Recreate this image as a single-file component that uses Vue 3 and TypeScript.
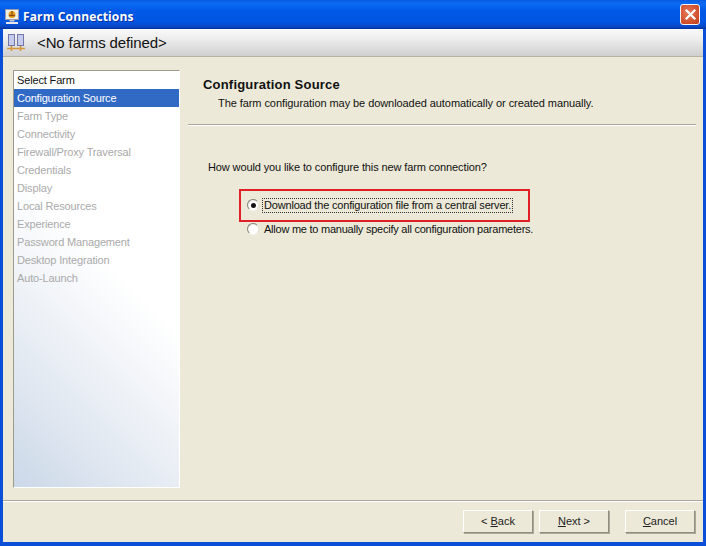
<script setup lang="ts">
const steps: string[] = ['Select Farm', 'Configuration Source', 'Farm Type', 'Connectivity', 'Firewall/Proxy Traversal', 'Credentials', 'Display', 'Local Resources', 'Experience', 'Password Management', 'Desktop Integration', 'Auto-Launch']
</script>

<template>
  <div class="window">
    <div class="titlebar">
      <svg class="appicon" width="14" height="15" viewBox="0 0 14 15">
        <rect x="0.5" y="0.5" width="13" height="10" fill="#f1efe6" stroke="#9a9cab"/>
        <circle cx="7" cy="5.5" r="3.5" fill="#e8a422"/>
        <path d="M7 2v3.5M4 6.5h6" stroke="#8a4a10" stroke-width="1.3"/>
        <rect x="4.5" y="11" width="5" height="1.5" fill="#c9ccd6"/>
        <rect x="1" y="13" width="12" height="2" fill="#e6e6ea"/>
      </svg>
      <span class="title">Farm Connections</span>
      <button class="close" aria-label="Close">
        <svg width="13" height="13" viewBox="0 0 13 13"><path d="M2.5 2.5l8 8M10.5 2.5l-8 8" stroke="#fff" stroke-width="2.2" stroke-linecap="square"/></svg>
      </button>
    </div>
    <div class="body">
      <div class="farmbar">
        <svg class="farmicon" width="18" height="18" viewBox="0 0 18 18">
          <rect x="1.5" y="0.5" width="6" height="11" fill="#c6cdec" stroke="#7478a8"/>
          <rect x="10.5" y="0.5" width="6" height="11" fill="#c6cdec" stroke="#7478a8"/>
          <path d="M0 14.5h18" stroke="#d8963a" stroke-width="1.5"/>
          <path d="M4.5 12v5M13.5 12v5" stroke="#d8963a" stroke-width="1.5"/>
        </svg>
        <span class="farmname">&lt;No farms defined&gt;</span>
      </div>
      <div class="main">
        <ul class="steps">
          <li v-for="(s, i) in steps" :key="s" :class="{ done: i === 0, active: i === 1 }">{{ s }}</li>
        </ul>
        <div class="content">
          <div class="heading">
            <h1>Configuration Source</h1>
            <p>The farm configuration may be downloaded automatically or created manually.</p>
          </div>
          <div class="question">
            <p class="ask">How would you like to configure this new farm connection?</p>
            <label class="radio first">
              <span class="dot on"></span>
              <span class="focus">Download the configuration file from a central server.</span>
              <span class="redbox"></span>
            </label>
            <label class="radio">
              <span class="dot"></span>
              <span class="plain">Allow me to manually specify all configuration parameters.</span>
            </label>
          </div>
        </div>
      </div>
      <div class="footer">
        <button class="btn"><span>&lt; <u>B</u>ack</span></button>
        <button class="btn"><span><u>N</u>ext &gt;</span></button>
        <button class="btn cancel"><span><u>C</u>ancel</span></button>
      </div>
    </div>
  </div>
</template>

<style>
html, body { margin: 0; background: #ece9d8; }
</style>

<style scoped>
.window {
  width: 706px;
  height: 546px;
  box-sizing: border-box;
  display: flex;
  flex-direction: column;
  overflow: hidden;
  background: #0a4fd8;
  font-family: "Liberation Sans", sans-serif;
  font-size: 11px;
  color: #111;
}
.titlebar {
  height: 29px;
  flex: none;
  box-sizing: border-box;
  display: flex;
  align-items: center;
  padding: 3px 5px 0 5px;
  background: linear-gradient(#0a5ae0 0%, #0a6af2 12%, #0058e6 40%, #0056e2 75%, #0a46c4 92%, #02349c 100%);
}
.appicon { flex: none; margin-right: 4px; }
.title {
  font-family: "Open Sans", "Liberation Sans", sans-serif;
  font-weight: 700;
  font-size: 12px;
  letter-spacing: 0.13px;
  color: #fff;
  text-shadow: 1px 1px 0 #0a2f9a;
}
.close {
  margin: -3px 1px 0 auto;
  width: 20px;
  height: 21px;
  padding: 0;
  display: flex;
  align-items: center;
  justify-content: center;
  border: 1px solid #f4f4f4;
  border-radius: 3px;
  background: radial-gradient(circle at 40% 40%, #e8775a, #cc4a26 75%, #b83a1c);
}
.body {
  flex: 1;
  margin: 0 3px 4px 3px;
  display: flex;
  flex-direction: column;
  background: #ece9d8;
  min-height: 0;
}
.farmbar {
  height: 28px;
  flex: none;
  display: flex;
  align-items: center;
  box-sizing: border-box;
  padding-left: 4px;
  border-bottom: 1px solid #b5b2a6;
  background: linear-gradient(#fafafa, #f0f0f0 30%, #cfcfcf);
}
.farmicon { flex: none; }
.farmname {
  margin-left: 12px;
  font-size: 15px;
  letter-spacing: -0.12px;
  color: #111;
}
.main {
  flex: 1;
  display: flex;
  min-height: 0;
  padding: 13px 0 12px 10px;
}
.steps {
  width: 167px;
  height: 418px;
  flex: none;
  box-sizing: border-box;
  margin: 0;
  padding: 0;
  list-style: none;
  border: 1px solid;
  border-color: #9d9a8e #fff #fff #9d9a8e;
  background: linear-gradient(225deg, #fff 45%, #e8edf4 72%, #cbd8e8 100%);
}
.steps li {
  height: 18px;
  line-height: 18px;
  padding-left: 3px;
  color: #aaa;
  letter-spacing: -0.15px;
  white-space: nowrap;
}
.steps li.done { color: #111; }
.steps li.active { background: #316ac5; color: #fff; letter-spacing: -0.2px; }
.content { flex: 1; min-width: 0; padding: 0 7px 0 8px; }
.heading {
  height: 55px;
  box-sizing: border-box;
  padding: 8px 0 0 15px;
  border-bottom: 1px solid #aca899;
  box-shadow: 0 1px 0 #fff;
}
.heading h1 {
  margin: 0;
  font-size: 13px;
  letter-spacing: 0.2px;
  font-weight: 700;
  line-height: 14px;
}
.heading p {
  margin: 4px 0 0 15px;
  line-height: 14px;
  letter-spacing: -0.07px;
}
.question { padding: 35px 0 0 20px; }
.ask { margin: 0 0 19px; line-height: 14px; letter-spacing: -0.12px; }
.radio {
  position: relative;
  display: flex;
  align-items: center;
  height: 24px;
  padding-left: 39px;
}
.dot {
  width: 12px;
  height: 12px;
  flex: none;
  box-sizing: border-box;
  border-radius: 50%;
  border: 1px solid;
  border-color: #85837a #e6e4da #f7f7f2 #85837a;
  background: radial-gradient(circle at 60% 60%, #fff 45%, #e2e0d6);
  display: flex;
  align-items: center;
  justify-content: center;
}
.dot.on::after {
  content: "";
  width: 5px;
  height: 5px;
  border-radius: 50%;
  background: #111;
}
.focus { margin-left: 3px; padding: 0 1px; border: 1px dotted #333; line-height: 13px; white-space: nowrap; letter-spacing: -0.18px; }
.plain { margin-left: 5px; white-space: nowrap; letter-spacing: -0.24px; }
.redbox {
  position: absolute;
  left: 31px;
  top: -4px;
  width: 291px;
  height: 33px;
  box-sizing: border-box;
  border: 2px solid #e01f26;
  pointer-events: none;
}
.footer {
  height: 42px;
  flex: none;
  box-sizing: border-box;
  display: flex;
  align-items: flex-start;
  padding: 9px 7px 0 460px;
  border-top: 1px solid #aca899;
  box-shadow: inset 0 1px 0 #fff;
}
.btn {
  width: 70px;
  height: 23px;
  margin-right: 6px;
  padding: 0 0 2px;
  box-sizing: border-box;
  border: 1px solid;
  border-color: #fff #8f8c80 #8f8c80 #fff;
  box-shadow: 1px 1px 0 #aca899;
  background: #ece9d8;
  font-family: "Liberation Sans", sans-serif;
  font-size: 11px;
  color: #222;
}
.btn.cancel { margin-left: 10px; margin-right: 0; }
</style>
